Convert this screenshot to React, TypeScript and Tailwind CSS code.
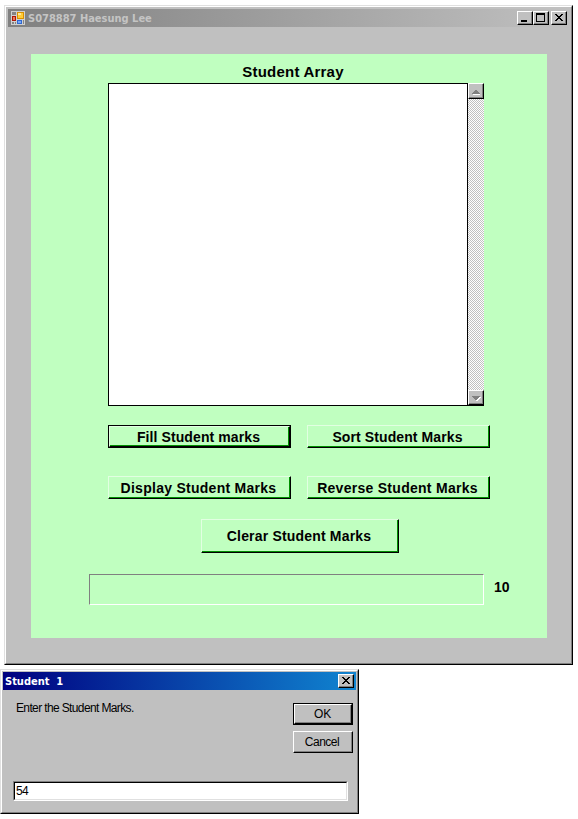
import React from "react";

const classic =
  "border border-t-white border-l-white border-r-black border-b-black shadow-[inset_-1px_-1px_0_#808080]";
const greenBevel =
  "border border-t-[#e2ffe2] border-l-[#e2ffe2] border-r-black border-b-black shadow-[inset_-1px_-1px_0_#009000]";

function CaptionButton({ children }: { children: React.ReactNode }) {
  return (
    <button className={`h-[14px] w-4 shrink-0 bg-[#c0c0c0] ${classic}`}>
      <svg width="14" height="12" viewBox="0 0 14 12" shapeRendering="crispEdges" className="block">
        {children}
      </svg>
    </button>
  );
}

function CloseGlyph() {
  return (
    <path
      fill="#000"
      d="M3 2h2v1h-2zM9 2h2v1h-2zM4 3h2v1h-2zM8 3h2v1h-2zM5 4h4v1h-4zM6 5h2v1h-2zM5 6h4v1h-4zM4 7h2v1h-2zM8 7h2v1h-2zM3 8h2v1h-2zM9 8h2v1h-2z"
    />
  );
}

function AppIcon() {
  return (
    <svg width="14" height="14" viewBox="0 0 14 14" shapeRendering="crispEdges" className="block shrink-0">
      <rect width="14" height="14" fill="#d0d0d0" />
      <rect x="1" y="1" width="4" height="3" fill="#858585" />
      <rect x="1" y="5" width="4" height="5" fill="#b01808" />
      <rect x="2" y="6" width="2" height="3" fill="#e87858" />
      <rect x="1" y="11" width="2" height="2" fill="#858585" />
      <rect x="4" y="11" width="1" height="2" fill="#858585" />
      <rect x="6" y="1" width="7" height="7" fill="#d89000" />
      <rect x="7" y="2" width="5" height="5" fill="#ffcc38" />
      <rect x="7" y="2" width="3" height="2" fill="#ffe898" />
      <rect x="6" y="9" width="5" height="4" fill="#3068d0" />
      <rect x="7" y="10" width="3" height="2" fill="#78a8f8" />
      <rect x="12" y="9" width="1" height="4" fill="#858585" />
    </svg>
  );
}

function MarkButton({ label, spacing, focused }: { label: string; spacing: string; focused?: boolean }) {
  const text = (
    <span className={`block whitespace-nowrap pr-[2px] text-center text-[14px] font-bold ${spacing}`}>{label}</span>
  );
  return focused ? (
    <button className="h-[23px] w-[183px] border border-black">
      <span className={`block h-[21px] leading-5 ${greenBevel}`}>{text}</span>
    </button>
  ) : (
    <button className={`h-[23px] w-[183px] ${greenBevel}`}>
      <span className="block h-[21px] leading-[22px]">{text}</span>
    </button>
  );
}

function ScrollButton({ down }: { down?: boolean }) {
  return (
    <button className={`${down ? "h-[15px]" : "h-4"} w-4 shrink-0 bg-[#c0c0c0] ${classic}`}>
      <svg width="14" height="13" viewBox="0 0 14 13" shapeRendering="crispEdges" className="block">
        {down ? (
          <>
            <path fill="#fff" d="M4 6h8v1h-1v1h-1v1h-1v1h-2v-1h-1v-1h-1v-1h-1z" />
            <path fill="#808080" d="M3 5h8v1h-1v1h-1v1h-1v1h-2v-1h-1v-1h-1v-1h-1z" />
          </>
        ) : (
          <>
            <path fill="#fff" d="M4 9h7v1h-7z" />
            <path fill="#808080" d="M6 5h2v1h1v1h1v1h1v1h-8v-1h1v-1h1v-1h1z" />
          </>
        )}
      </svg>
    </button>
  );
}

function MainWindow() {
  return (
    <section className="ml-1 h-[660px] w-[569px] border border-t-[#e0e0e0] border-l-[#e0e0e0] border-r-black border-b-black bg-[#c0c0c0]">
      <div className="h-full border border-t-white border-l-white border-r-[#808080] border-b-[#808080] px-[2px] pt-[2px]">
        <header className="flex h-[18px] items-center bg-[linear-gradient(to_right,#808080,#c0c0c0)] pl-[3px] pr-[2px]">
          <AppIcon />
          <h1 className="ml-[3px] whitespace-nowrap pt-[2px] font-['DejaVu_Sans_Condensed','DejaVu_Sans',sans-serif] text-[11px] font-bold leading-4 text-[#c4c4c4]">
            S078887 Haesung Lee
          </h1>
          <div className="ml-auto flex">
            <CaptionButton>
              <path fill="#000" d="M3 8h6v2h-6z" />
            </CaptionButton>
            <CaptionButton>
              <path fill="#000" fillRule="evenodd" d="M2 1h9v9h-9zM3 3v6h7v-6z" />
            </CaptionButton>
            <div className="ml-[2px] flex">
              <CaptionButton>
                <CloseGlyph />
              </CaptionButton>
            </div>
          </div>
        </header>
        <main className="ml-[23px] mt-[27px] h-[584px] w-[516px] bg-[#c0ffc0] pt-[7px]">
          <h2 className="mb-px ml-[77px] w-[370px] text-center text-[15px] font-bold leading-[21px] tracking-[0.22px]">
            Student Array
          </h2>
          <div className="ml-[77px] flex h-[323px] w-[376px] border-b border-black">
            <div className="w-[360px] border border-b-0 border-black bg-white" />
            <div className="flex w-4 flex-col justify-between bg-[repeating-conic-gradient(#c0c0c0_0_25%,#fff_0_50%)] bg-[length:2px_2px]">
              <ScrollButton />
              <ScrollButton down />
            </div>
          </div>
          <div className="ml-[77px] mt-[19px] flex gap-4">
            <MarkButton label="Fill Student marks" spacing="tracking-[0.1px]" focused />
            <MarkButton label="Sort Student Marks" spacing="tracking-[0.1px]" />
          </div>
          <div className="ml-[77px] mt-7 flex gap-4">
            <MarkButton label="Display Student Marks" spacing="tracking-[0.27px]" />
            <MarkButton label="Reverse Student Marks" spacing="tracking-[0.28px]" />
          </div>
          <button
            className={`ml-[170px] mt-5 block h-[34px] w-[198px] whitespace-nowrap pr-[2px] text-center text-[14px] font-bold leading-[32px] tracking-[0.18px] ${greenBevel}`}
          >
            Clerar Student Marks
          </button>
          <div className="ml-[58px] mt-[21px] flex">
            <div className="h-[31px] w-[395px] border border-t-[#808080] border-l-[#808080] border-r-white border-b-white" />
            <span className="ml-[10px] text-[14px] font-bold leading-[27px]">10</span>
          </div>
        </main>
      </div>
    </section>
  );
}

function InputDialog() {
  return (
    <section className="mt-1 h-[145px] w-[359px] border border-t-[#e0e0e0] border-l-[#e0e0e0] border-r-black border-b-black bg-[#c0c0c0]">
      <div className="h-full border border-t-white border-l-white border-r-[#808080] border-b-[#808080] px-px pt-px">
        <header className="flex h-[18px] items-center bg-[linear-gradient(to_right,#000080,#1084d0)] pl-[2px] pr-[2px]">
          <h2 className="whitespace-pre pt-[2px] font-['DejaVu_Sans_Condensed','DejaVu_Sans',sans-serif] text-[11px] font-bold leading-4 text-white">
            Student  1
          </h2>
          <div className="ml-auto flex">
            <CaptionButton>
              <CloseGlyph />
            </CaptionButton>
          </div>
        </header>
        <div className="flex justify-between pl-[13px] pr-[3px] pt-[13px] text-[12px]">
          <p className="-mt-[2px] whitespace-nowrap leading-[14px] tracking-[-0.63px]">Enter the Student Marks.</p>
          <div className="flex flex-col gap-[6px]">
            <button className="h-[22px] w-[60px] border border-black">
              <span className={`block h-5 pr-px leading-[18px] tracking-[-0.2px] ${classic}`}>OK</span>
            </button>
            <button className={`h-[22px] w-[60px] pr-[2px] leading-5 tracking-[-0.5px] ${classic}`}>Cancel</button>
          </div>
        </div>
        <div className="ml-[10px] mt-7 h-5 w-[335px] border border-t-[#808080] border-l-[#808080] border-r-white border-b-white">
          <input
            readOnly
            value="54"
            className="block h-[18px] w-full border border-t-black border-l-black border-r-[#e0e0e0] border-b-[#e0e0e0] bg-white pl-px text-[12px] leading-4 tracking-[-0.7px] outline-none"
          />
        </div>
      </div>
    </section>
  );
}

export default function App() {
  return (
    <div className="h-[819px] w-[578px] overflow-hidden bg-white pt-[5px] font-['Liberation_Sans',Arial,sans-serif] text-black">
      <MainWindow />
      <InputDialog />
    </div>
  );
}
